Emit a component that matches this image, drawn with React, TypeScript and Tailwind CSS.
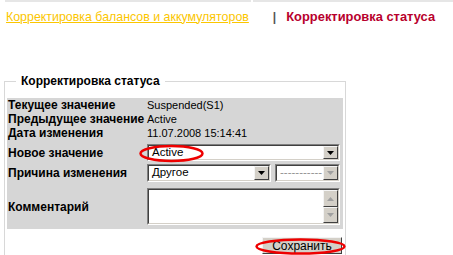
import React from "react";

const sunken =
  "border border-t-[#808080] border-l-[#808080] border-b-white border-r-white";
const sunkenInner =
  "border border-t-[#404040] border-l-[#404040] border-b-[#d4d0c8] border-r-[#d4d0c8]";
const raised =
  "border border-t-[#f4f4f4] border-l-[#f4f4f4] border-b-[#404040] border-r-[#404040] bg-[#d4d0c8]";

function Arrow({ up = false, disabled = false }: { up?: boolean; disabled?: boolean }) {
  return (
    <svg width="7" height="4" viewBox="0 0 7 4">
      <polygon
        points={up ? "0,4 7,4 3.5,0" : "0,0 7,0 3.5,4"}
        fill={disabled ? "#a0a0a0" : "#000"}
      />
    </svg>
  );
}

function DropBtn({ disabled = false, up = false, h = "h-full" }: { disabled?: boolean; up?: boolean; h?: string }) {
  return (
    <div className={`w-[15px] ${h} ${raised} flex items-center justify-center shrink-0`}>
      <Arrow disabled={disabled} up={up} />
    </div>
  );
}

function Select({ w, h, text, disabled = false }: { w: string; h: string; text: string; disabled?: boolean }) {
  return (
    <div className={`${w} ${h} ${sunken} shrink-0`}>
      <div className={`h-full ${sunkenInner} bg-white flex items-center`}>
        <span
          className={`flex-1 pl-[3px] text-[11.5px] leading-none ${disabled ? "text-[#909090]" : "text-black"} overflow-hidden whitespace-nowrap`}
        >
          {text}
        </span>
        <DropBtn disabled={disabled} />
      </div>
    </div>
  );
}

const lab = "w-[140px] pl-[1px] font-bold whitespace-nowrap text-[12px]";
const val = "text-[11px]";

export default function App() {
  const font = { fontFamily: '"Liberation Sans", Arial, sans-serif' };
  return (
    <div className="relative w-[453px] h-[255px] bg-white overflow-hidden whitespace-nowrap" style={font}>
      {/* top bar */}
      <div className="flex h-[2px]">
        <div className="ml-[5px] w-[246px] bg-[#e6e6e6]" />
        <div className="ml-[2px] flex-1 bg-[#e6e6e6]" />
      </div>
      <div className="flex items-center h-[18px] mt-[6px]">
        <span className="ml-[6px] text-[12.4px] text-[#fbc600] underline underline-offset-[1px]">
          Корректировка балансов и аккумуляторов
        </span>
        <span className="ml-[24px] text-[12px] text-[#555] font-bold">|</span>
        <span className="ml-[10px] text-[#b8002d] font-bold text-[12.9px]">
          Корректировка статуса
        </span>
      </div>

      {/* fieldset */}
      <fieldset className="mt-[48px] ml-[4px] w-[342px] h-[200px] border border-[#d8d8d8] px-[2px] pt-0 pb-[2px]">
        <legend className="ml-[9px] px-[5px] text-[12px] font-bold text-black leading-[14px]">
          Корректировка статуса
        </legend>
        <div className="mt-[10px] w-[336px] bg-[#d6d6d6] pb-[4px] text-[12px] text-black">
          <div className="flex h-[14px] items-center">
            <div className={lab}>Текущее значение</div>
            <div className={val}>Suspended(S1)</div>
          </div>
          <div className="flex h-[14px] items-center">
            <div className={lab}>Предыдущее значение</div>
            <div className={val}>Active</div>
          </div>
          <div className="flex h-[14px] items-center">
            <div className={lab}>Дата изменения</div>
            <div className={val}>11.07.2008 15:14:41</div>
          </div>
          <div className="flex h-[17px] items-center mt-[4px]">
            <div className={lab}>Новое значение</div>
            <Select w="w-[193px]" h="h-[17px]" text="Active" />
          </div>
          <div className="flex h-[18px] items-center mt-[3px]">
            <div className={lab}>Причина изменения</div>
            <Select w="w-[124px]" h="h-[18px]" text="Другое" />
            <div className="w-[4px]" />
            <Select w="w-[65px]" h="h-[18px]" text="-----------" disabled />
          </div>
          <div className="flex h-[37px] items-center mt-[6px]">
            <div className={lab}>Комментарий</div>
            <div className={`w-[193px] h-[37px] ${sunken}`}>
              <div className={`h-full ${sunkenInner} bg-white flex justify-end`}>
                <div className="flex flex-col">
                  <DropBtn up disabled h="h-[17px]" />
                  <DropBtn disabled h="h-[16px]" />
                </div>
              </div>
            </div>
          </div>
        </div>
        <div className="flex justify-end mt-[8px] pr-[1px]">
          <button
            className={`w-[80px] h-[17px] ${raised} text-[12px] text-black leading-none flex items-center justify-center`}
            style={font}
          >
            Сохранить
          </button>
        </div>
      </fieldset>

      {/* red annotation ellipses */}
      <svg className="absolute left-0 top-0 pointer-events-none" width="453" height="255">
        <ellipse cx="171.5" cy="153.5" rx="31" ry="7.5" fill="none" stroke="#ee0000" strokeWidth="2.5" />
        <ellipse cx="300.5" cy="246.5" rx="44" ry="7" fill="none" stroke="#ee0000" strokeWidth="2.5" />
      </svg>
    </div>
  );
}
